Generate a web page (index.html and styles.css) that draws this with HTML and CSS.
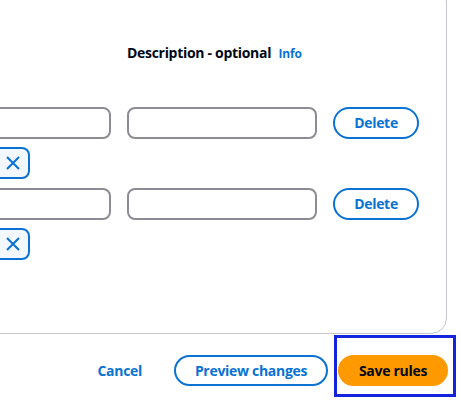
FILE: index.html
```html
<!DOCTYPE html>
<html lang="en">
<head>
<meta charset="utf-8">
<title>Edit rules</title>
<link rel="stylesheet" href="styles.css">
</head>
<body>
<main class="page">
  <section class="card">
    <div class="editor">
      <div class="grid labels">
        <span class="label"></span>
        <span class="label">Description - optional <a class="info" href="#">Info</a></span>
        <span></span>
      </div>
      <div class="grid row">
        <div class="cell">
          <div class="input"></div>
          <div class="token"><span class="token-text"></span><span class="dismiss"><svg viewBox="0 0 16 16" width="16" height="16"><path d="M2 2l12 12M14 2L2 14" fill="none" stroke="currentColor" stroke-width="2"/></svg></span></div>
        </div>
        <div class="cell"><div class="input"></div></div>
        <div class="cell"><button class="btn btn-normal">Delete</button></div>
      </div>
      <div class="grid row">
        <div class="cell">
          <div class="input"></div>
          <div class="token"><span class="token-text"></span><span class="dismiss"><svg viewBox="0 0 16 16" width="16" height="16"><path d="M2 2l12 12M14 2L2 14" fill="none" stroke="currentColor" stroke-width="2"/></svg></span></div>
        </div>
        <div class="cell"><div class="input"></div></div>
        <div class="cell"><button class="btn btn-normal">Delete</button></div>
      </div>
    </div>
  </section>
  <footer class="actions">
    <button class="btn btn-link">Cancel</button>
    <button class="btn btn-normal btn-footer btn-preview">Preview changes</button>
    <button class="btn btn-primary btn-footer btn-save">Save rules</button>
  </footer>
  <div class="highlight"></div>
</main>
</body>
</html>
```

FILE: styles.css
```css
* { box-sizing: border-box; }
html, body { margin: 0; padding: 0; background: #ffffff; }
body {
  width: 461px;
  height: 401px;
  overflow: hidden;
  font-family: "Open Sans", "Noto Sans", Arial, sans-serif;
  color: #000716;
}
.page { position: relative; display: flow-root; width: 461px; height: 401px; }

.card {
  margin-left: -100px;
  margin-top: -14px;
  width: 547px;
  height: 348px;
  border: 1px solid #c6c6cd;
  border-radius: 16px;
  background: #fff;
  padding: 56px 20px 0 20px;
}
.editor { display: flex; flex-direction: column; gap: 9px; }
.grid {
  display: grid;
  grid-template-columns: 190px 190px 86px;
  column-gap: 16px;
}
.labels { height: 20px; margin-bottom: 35px; align-items: center; }
.label {
  font-size: 14px;
  font-weight: 700;
  line-height: 20px;
  white-space: nowrap;
  letter-spacing: -0.3px;
}
.info {
  font-size: 12px;
  font-weight: 700;
  color: #0972d3;
  text-decoration: none;
  margin-left: 4px;
  letter-spacing: -0.2px;
}
.cell { display: flex; flex-direction: column; gap: 8px; }
.input {
  height: 32px;
  border: 2px solid #8c8c94;
  border-radius: 8px;
  background: #fff;
}
.token {
  width: 109px;
  height: 32px;
  border: 2px solid #0972d3;
  border-radius: 8px;
  background: #f2f8fd;
  display: flex;
  align-items: center;
  justify-content: space-between;
  padding: 0 7px 0 10px;
}
.token-text { width: 40px; }
.dismiss { color: #0972d3; display: flex; }
.dismiss svg { width: 16px; height: 16px; }

.btn {
  font-family: inherit;
  font-size: 14px;
  font-weight: 700;
  border-radius: 20px;
  padding: 0 20px;
  cursor: pointer;
  white-space: nowrap;
  line-height: 20px;
  letter-spacing: -0.3px;
  display: inline-flex;
  align-items: center;
  justify-content: center;
}
.btn-normal {
  height: 32px;
  background: #fff;
  border: 2px solid #0972d3;
  color: #0972d3;
}
.btn-link {
  background: none;
  border: 2px solid transparent;
  color: #0972d3;
  height: 31px;
}
.btn-primary {
  background: #ff9900;
  border: 2px solid #ff9900;
  color: #000716;
}
.btn-footer { height: 31px; padding: 0; }
.btn-preview { width: 154px; }
.btn-save { width: 110px; }

.actions {
  display: flex;
  justify-content: flex-end;
  align-items: center;
  gap: 10px;
  margin-top: 21px;
  padding-right: 13px;
}
.highlight {
  position: absolute;
  left: 334px;
  top: 335px;
  width: 122px;
  height: 62px;
  border: 3px solid #1423dc;
}
```
